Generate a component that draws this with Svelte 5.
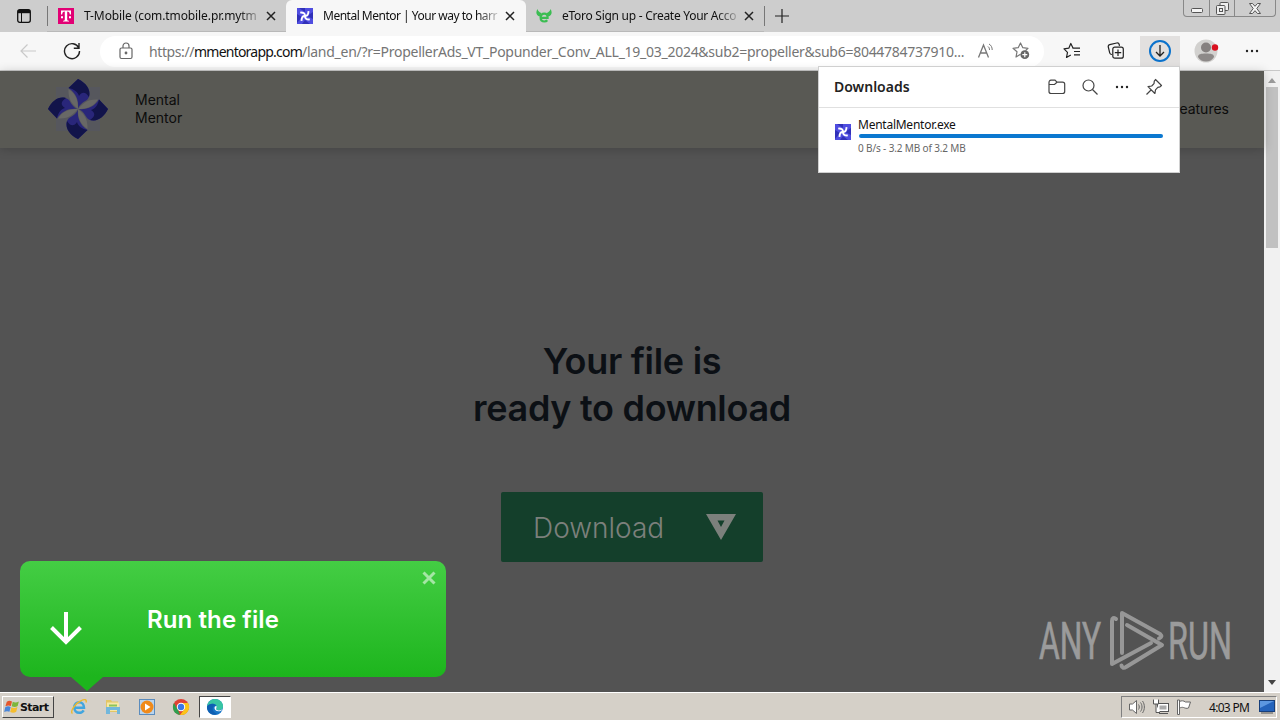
<script lang="ts">
	type Tab = { icon: 'tmobile' | 'mentor' | 'etoro'; title: string; active?: boolean };

	const tabs: Tab[] = [
		{ icon: 'tmobile', title: 'T-Mobile (com.tmobile.pr.mytm' },
		{ icon: 'mentor', title: 'Mental Mentor | Your way to harr', active: true },
		{ icon: 'etoro', title: 'eToro Sign up - Create Your Acco' }
	];

	const url = {
		scheme: 'https://',
		host: 'mmentorapp.com',
		path: '/land_en/?r=PropellerAds_VT_Popunder_Conv_ALL_19_03_2024&sub2=propeller&sub6=8044784737910...'
	};

	let downloadsOpen = $state(true);
	let toastOpen = $state(true);
</script>

{#snippet pinwheel()}
	<svg width="16" height="16" viewBox="0 0 16 16">
		<rect width="16" height="16" fill="#4f4de0" />
		<path d="M2 0h6v4zM10 8l6-4v7zM0 6l5 3-5 6zM8 12l5 4H5z" fill="#3030b8" />
		{#each [0, 90, 180, 270] as angle (angle)}
			<path
				d="M8 8C8.200 5.800 6.500 4.300 3.200 4.600"
				fill="none"
				stroke="#fff"
				stroke-width="1.900"
				transform={`rotate(${angle} 8 8)`}
			/>
		{/each}
	</svg>
{/snippet}

{#snippet favicon(name: Tab['icon'])}
	{#if name === 'tmobile'}
		<svg width="16" height="16" viewBox="0 0 16 16">
			<rect width="16" height="16" fill="#e20074" />
			<path
				d="M3 2.500h10v4h-1.200C11.700 4.500 11 3.600 9.200 3.500v7.700c0 1.200.5 1.500 1.800 1.500v.9H5v-.9c1.300 0 1.800-.3 1.800-1.500V3.500C5 3.600 4.300 4.500 4.200 6.500H3z"
				fill="#fff"
			/>
			<path d="M3 8.200h2v2H3zM11 8.200h2v2h-2z" fill="#fff" />
		</svg>
	{:else if name === 'mentor'}
		{@render pinwheel()}
	{:else}
		<svg width="16" height="16" viewBox="0 0 16 16">
			<path
				d="M1.500 1C-.5 4 0 7.500 4 8.500L5.500 5C3.500 4.500 2 3 1.500 1zM14.500 1c2 3 1.500 6.500-2.500 7.500L10.500 5c2-.5 3.500-2 4-4z"
				fill="#3bbd52"
			/>
			<path
				d="M5 9.800h6.600C11.700 7 10.300 5.600 8.200 5.600 6.100 5.600 4.600 7.200 4.600 9.500s1.500 4 3.800 4c1.200 0 2.200-.4 2.900-1.200"
				fill="none"
				stroke="#3bbd52"
				stroke-width="2.200"
			/>
		</svg>
	{/if}
{/snippet}

{#snippet cross()}
	<svg width="10" height="10" viewBox="0 0 10 10">
		<path d="M1 1l8 8M9 1L1 9" stroke="#222" stroke-width="1.500" />
	</svg>
{/snippet}

{#snippet dots()}
	<svg width="16" height="4" viewBox="0 0 16 4" fill="#222">
		<circle cx="3" cy="2" r="1.200" /><circle cx="8" cy="2" r="1.200" /><circle cx="13" cy="2" r="1.200" />
	</svg>
{/snippet}

<div class="desktop">
	<div class="tabbar">
		<div class="tab-actions">
			<svg width="14" height="14" viewBox="0 0 14 14">
				<rect x=".7" y=".7" width="12.600" height="12.600" rx="2" fill="none" stroke="#111" stroke-width="1.300" />
				<path d="M1 1h12v3.200H1z" fill="#111" />
				<path d="M4.500 4v9" stroke="#111" />
			</svg>
		</div>
		{#each tabs as tab (tab.icon)}
			<div class="tab" class:active={tab.active}>
				{@render favicon(tab.icon)}
				<span class="tab-title {tab.icon}">{tab.title}</span>
				{@render cross()}
			</div>
		{/each}
		<div class="new-tab">
			<svg width="14" height="14" viewBox="0 0 14 14">
				<path d="M7 0v14M0 7h14" stroke="#222" stroke-width="1.200" />
			</svg>
		</div>
		<div class="window-controls">
			<span class="min">
				<svg width="12" height="5" viewBox="0 0 12 5">
					<rect x=".5" y=".5" width="11" height="4" rx="1" fill="#f4f4f4" stroke="#555" />
				</svg>
			</span>
			<span class="max">
				<svg width="13" height="13" viewBox="0 0 13 13" fill="#eee" stroke="#555">
					<rect x="4" y=".5" width="8.500" height="8" rx="1" />
					<rect x=".5" y="3.500" width="8.500" height="9" rx="1" />
					<rect x="3.500" y="6.500" width="3" height="3" />
				</svg>
			</span>
			<span class="shut">
				<svg width="12" height="11" viewBox="0 0 12 11">
					<path
						d="M.5.500h3L6 3.300 8.500.500h3L7.800 5.500l3.700 5h-3L6 7.700l-2.500 2.800h-3l3.700-5z"
						fill="#f4f4f4"
						stroke="#555"
					/>
				</svg>
			</span>
		</div>
	</div>

	<div class="toolbar">
		<span class="tool">
			<svg width="18" height="16" viewBox="0 0 18 16" fill="none" stroke="#c9c9c9" stroke-width="1.200">
				<path d="M17 8H2M8.500 1.500L2 8l6.500 6.500" />
			</svg>
		</span>
		<span class="tool">
			<svg width="18" height="18" viewBox="0 0 18 18" fill="none" stroke="#222" stroke-width="1.400">
				<path d="M15.800 6A7.500 7.500 0 1 0 16.500 9M16 1v5.200h-5.200" />
			</svg>
		</span>
		<div class="address">
			<svg width="20" height="18" viewBox="0 0 20 18" fill="none" stroke="#666" stroke-width="1.200">
				<rect x="4" y="6" width="12" height="10.500" rx="1.500" />
				<path d="M7 6V4a3 3 0 0 1 6 0v2" />
				<circle cx="10" cy="11" r=".8" fill="#666" />
			</svg>
			<span class="url"><span>{url.scheme}</span><b>{url.host}</b><span class="path">{url.path}</span></span>
			<svg class="read" width="20" height="18" viewBox="0 0 20 18" fill="none" stroke="#777">
				<path d="M2.500 15.500L7.500 3l5 12.500M4.200 11h6.600" stroke-width="1.300" />
				<path d="M12 4.500c1.200 1 1.500 2 1.500 3.500M13 2c2.200 1.300 3.200 3.200 3.200 6" />
			</svg>
			<svg width="20" height="18" viewBox="0 0 20 18" fill="none" stroke="#777" stroke-width="1.200">
				<path d="M9.500 12.300L5 15l1-5.200L2 6.300l5.200-.6L9.500 1l2.300 4.700 5.200.6-2.500 2.300" stroke-linejoin="round" />
				<circle cx="13.800" cy="12.700" r="4.400" fill="#666" stroke="none" />
				<path d="M13.800 10.200v5M11.300 12.700h5" stroke="#fff" />
			</svg>
		</div>
		<span class="tool">
			<svg width="18" height="18" viewBox="0 0 18 18" fill="none" stroke="#222" stroke-width="1.200">
				<path d="M10 6L7.800 1.500 5.800 6.200 1 6.800l3.500 3.500-1 5.200 4.300-2.500" stroke-linejoin="round" />
				<path d="M9.500 6.200H17M11 9.500h6M11 12.800h6" />
			</svg>
		</span>
		<span class="tool">
			<svg width="18" height="18" viewBox="0 0 18 18" fill="none" stroke="#222" stroke-width="1.200">
				<path d="M5 12.500C3.500 12.500 3 12 2.700 10.800L1.300 5C1 3.700 1.500 3 2.700 2.700l7-1.700c1.400-.3 2.200.2 2.500 1.500l.3 1.300" />
				<rect x="5.800" y="5.200" width="10.500" height="11" rx="2" />
				<path d="M11 7.500v6.400M7.800 10.700h6.400" />
			</svg>
		</span>
		<button class="tool download-btn" aria-label="Downloads" onclick={() => (downloadsOpen = !downloadsOpen)}>
			<svg width="24" height="24" viewBox="0 0 24 24" fill="none">
				<circle cx="12" cy="12" r="10" stroke="#0b72cc" stroke-width="2" />
				<path d="M12 6v11M8 13l4 4 4-4" stroke="#222" stroke-width="1.300" />
			</svg>
		</button>
		<span class="tool avatar">
			<svg width="26" height="24" viewBox="0 0 26 24">
				<circle cx="12" cy="12" r="11.500" fill="#d2d1cf" />
				<circle cx="12" cy="8.500" r="5" fill="#85807f" />
				<path d="M4 18c0-3 3-3.500 8-3.500s8 .5 8 3.500c-1.700 3-4.700 4.600-8 4.600S5.700 21 4 18z" fill="#8d8988" />
				<circle cx="21" cy="8.500" r="3.200" fill="#d9101e" />
			</svg>
		</span>
		<span class="tool more">{@render dots()}</span>
	</div>

	<div class="viewport">
		<div class="page">
			<header class="site-header">
				<svg class="logo" width="62" height="62" viewBox="-31 -31 62 62">
					<rect x="-22" y="-22" width="44" height="44" fill="#56575d" />
					{#each [0, 90, 180, 270] as angle (angle)}
						<g transform={`rotate(${angle})`}>
							<path d="M0 0C1-9-2-16-9.500-21L0-30C10-25 15-15 9-9 4-6 1-4 0 0z" fill="#29267a" />
							<path d="M0-30L-9.500-21C-4-20 0-17 1-13 4-18 8-17 11-12 13-20 8-26 0-30z" fill="#12144a" />
							<path d="M0 0C-5-5-10-8-9.500-20-2-15 0-9 0 0z" fill="#686866" />
						</g>
					{/each}
				</svg>
				<span class="brand">Mental<br />Mentor</span>
				<span class="nav-link">Features</span>
			</header>

			<main>
				<h1>Your file is<br />ready to download</h1>
				<button class="cta">
					<span>Download</span>
					<svg width="30" height="26" viewBox="0 0 30 26">
						<path d="M0 0h30L15 26zM11.500 6.500L15 13l3.500-6.500z" fill="#7c807c" fill-rule="evenodd" />
					</svg>
				</button>
			</main>

			<svg class="watermark" width="204" height="64" viewBox="0 0 204 64">
				<g fill="#9b9b9b" stroke="#9b9b9b" stroke-width=".7" font-family="Roboto, sans-serif" font-size="52">
					<text x="2" y="50" textLength="62" lengthAdjust="spacingAndGlyphs">ANY</text>
					<text x="131" y="50" textLength="64" lengthAdjust="spacingAndGlyphs">RUN</text>
				</g>
				<g fill="none" stroke="#979797" stroke-width="4" stroke-linejoin="round" stroke-linecap="round">
					<path d="M79 10c-2-2-4-1-4 2v43l39-21" />
					<path d="M85 44V4l38 21c2 2 2 3-1 4.500" />
					<path d="M90 16l35 20-36 22c-2 1.500-4 1-4.500-1.500" />
				</g>
			</svg>
		</div>

		<div class="scrollbar">
			<svg width="8" height="5" viewBox="0 0 8 5"><path d="M0 5l4-5 4 5z" fill="#9b9b9b" /></svg>
			<div class="thumb"></div>
			<svg class="down" width="8" height="5" viewBox="0 0 8 5"><path d="M0 0l4 5 4-5z" fill="#444" /></svg>
		</div>
	</div>

	{#if downloadsOpen}
		<div class="downloads">
			<div class="downloads-head">
				<strong>Downloads</strong>
				<svg width="18" height="16" viewBox="0 0 18 16" fill="none" stroke="#444" stroke-width="1.200">
					<path d="M1 12.500v-9C1 2 1.700 1.200 3 1.200h4l2 2h5.500c1.500 0 2.200.8 2.200 2v7.300c0 1.300-.8 2-2.200 2H3.200c-1.400 0-2.200-.7-2.200-2z" />
					<path d="M1 5.500h5.500L9 3.200" />
				</svg>
				<svg width="18" height="16" viewBox="0 0 18 16" fill="none" stroke="#444" stroke-width="1.200">
					<circle cx="7.500" cy="6.500" r="5.500" />
					<path d="M11.500 10.500l5 5" />
				</svg>
				{@render dots()}
				<svg width="18" height="18" viewBox="0 0 18 18" fill="none" stroke="#444" stroke-width="1.200" stroke-linejoin="round">
					<path d="M10.500 1.500l6 6-1.500 1.300-2.200.6-2.300 2.400-.6 3.700L3 8.600l3.700-.6L9 5.600l.3-2.500zM6.300 11.800L1.500 16.500" />
				</svg>
			</div>
			<div class="download-item">
				{@render pinwheel()}
				<div class="download-info">
					<span class="filename">MentalMentor.exe</span>
					<div class="progress"></div>
					<span class="status">0 B/s - 3.2 MB of 3.2 MB</span>
				</div>
			</div>
		</div>
	{/if}

	{#if toastOpen}
		<div class="toast">
			<svg width="32" height="34" viewBox="0 0 32 34" fill="none" stroke="#fff" stroke-width="4">
				<path d="M16 1v29M1.500 16.500L16 31l14.500-14.500" />
			</svg>
			<span>Run the file</span>
			<button class="toast-close" aria-label="Close" onclick={() => (toastOpen = false)}>
				<svg width="14" height="14" viewBox="0 0 14 14">
					<path d="M1.500 1.500l11 11M12.500 1.500l-11 11" stroke="#a5e6a5" stroke-width="3" />
				</svg>
			</button>
		</div>
	{/if}

	<div class="taskbar">
		<div class="start">
			<svg width="16" height="16" viewBox="0 0 17 16">
				<path d="M3 2.500C5 1 6.500 1.300 8.500 2.200L7.300 7C5.500 6.200 4 6 1.500 7.300z" fill="#e5562b" />
				<path d="M9.300 2.500c2 1 4 1 6.500-.3L14.500 7c-2 1.300-4 1.300-6.300.3z" fill="#7db63b" />
				<path d="M1.300 8.200c2-1.300 4-1.200 5.800-.3L5.800 13C4 12.200 2.300 12.200.2 13.200z" fill="#4a86d8" />
				<path d="M7.900 8.300c2 1 4 1 6.400-.4L13 13c-2 1.400-4.200 1.400-6.400.3z" fill="#f5bd2e" />
			</svg>
			<span>Start</span>
		</div>
		<div class="quick">
			<span>
				<svg width="18" height="18" viewBox="0 0 18 18" fill="none">
					<path d="M4.500 9.800h9.500C14 6.500 12 4.200 9.200 4.200S4.300 6.300 4.300 9.500s2 5.300 5 5.300c2 0 3.500-1 4.400-2.500" stroke="#41a5df" stroke-width="2.500" />
					<path d="M2.500 15.500C-.5 14 5 5.500 10.500 3c4.500-2.300 6.500-1.500 5.500 1.500" stroke="#ecb92e" stroke-width="1.400" />
				</svg>
			</span>
			<span>
				<svg width="18" height="18" viewBox="0 0 18 18">
					<path d="M2 2h5l1 1.500h6V14H2z" fill="#e3c665" />
					<path d="M3 4.500h12V13H3z" fill="#f5e7a7" />
					<path d="M2 9h14v7h-3v-4H6v4H2z" fill="#72b7dc" />
					<path d="M5 6.500h8v2H5z" fill="#8dc45a" />
				</svg>
			</span>
			<span>
				<svg width="18" height="18" viewBox="0 0 18 18">
					<rect x="1.500" y="1.500" width="15" height="15" fill="#b9d4ee" stroke="#5b8cbd" />
					<circle cx="9" cy="9" r="6.500" fill="#f08a1a" />
					<path d="M7 5.500l5.500 3.500L7 12.500z" fill="#fff" />
				</svg>
			</span>
			<span>
				<svg width="18" height="18" viewBox="0 0 18 18">
					<circle cx="9" cy="9" r="8" fill="#e04235" />
					<path d="M2 5l4.500 8L8 17A8 8 0 0 1 2 5z" fill="#2f9f4f" />
					<path d="M9 5h7a8 8 0 0 1-8 12l4.500-6z" fill="#fbc518" />
					<circle cx="9" cy="9" r="4.200" fill="#fff" />
					<circle cx="9" cy="9" r="3.200" fill="#3b78e7" />
				</svg>
			</span>
			<span class="running">
				<svg width="18" height="18" viewBox="0 0 18 18">
					<circle cx="9" cy="9" r="8" fill="#1675c7" />
					<path d="M1 8.500C2 3 5.500 1 9 1c5 0 8.500 4 8 8-.5 3-4 4-6.500 2.800C9.500 11 11 10 10.500 8 9.500 5 4 4.500 1 8.500z" fill="#38c5a3" />
					<path d="M1 8.500C3 5 8.500 5 10.300 7.500 7 7.500 6 10 7 12.500c1 2 3 3 4.500 3.500C5 18.500.5 14 1 8.500z" fill="#0e5fb2" />
					<path d="M10.500 8c.5 2-1 2.800 0 3.800 2.500 1.300 5 .2 6-.8-.5 1.500-2 2.300-4 2.300-2.500 0-4-1.500-4-3.300 0-1.200.8-2.200 2-2z" fill="#fff" />
				</svg>
			</span>
		</div>
		<div class="tray">
			<svg width="18" height="16" viewBox="0 0 18 16" fill="#fff" stroke="#666">
				<path d="M1.500 5h3L8.500 1.500v13L4.500 11h-3z" />
				<path d="M10.500 5.500c1 1.500 1 3.500 0 5M12.500 3.500c2 2.500 2 6.500 0 9M14.500 2c2.500 3.500 2.500 8.500 0 12" fill="none" />
			</svg>
			<svg width="18" height="16" viewBox="0 0 18 16" fill="#fff" stroke="#555">
				<rect x="5.500" y="4.500" width="11" height="8" />
				<rect x="7.500" y="6.500" width="7" height="4" fill="#aaa" stroke="none" />
				<path d="M7 14.500h9" />
				<path d="M1.500.500v4.500h5V.500M4 5v8.500h4" />
			</svg>
			<svg width="18" height="16" viewBox="0 0 18 16" fill="#fff" stroke="#666">
				<path d="M3.500 2.500c2-1 4-1 6 .5h5l-2 6c-2 .8-3.500 0-5-.5-1.500-.4-2.500 0-4 .5z" />
				<path d="M1.500 1v14.500h2V1z" />
			</svg>
			<time>4:03 PM</time>
			<svg width="16" height="14" viewBox="0 0 16 14">
				<rect x=".5" y=".5" width="15" height="11" fill="#2463bb" stroke="#173f7b" />
				<path d="M1 1h14L1 8z" fill="#5c97e0" />
				<path d="M2 13h12" stroke="#555" />
			</svg>
		</div>
	</div>
</div>

<style>
	:global(body) {
		overflow: hidden;
	}
	.desktop {
		position: relative;
		display: flex;
		flex-direction: column;
		width: 1280px;
		height: 720px;
		overflow: hidden;
		font-family: 'Noto Sans', 'Open Sans', sans-serif;
		color: #111;
	}
	svg {
		display: block;
		flex: none;
	}
	button {
		border: none;
		padding: 0;
		font: inherit;
	}

	/* tab strip */
	.tabbar {
		display: flex;
		flex: none;
		height: 32px;
		background: #cdcdcd;
	}
	.tab-actions {
		display: flex;
		align-items: center;
		justify-content: center;
		box-sizing: border-box;
		width: 47px;
		height: 32px;
	}
	.tab {
		display: flex;
		align-items: center;
		box-sizing: border-box;
		width: 239px;
		height: 32px;
		padding-left: 11px;
		border-bottom: 1px solid #b9b9b9;
	}
	.tab:nth-child(2) {
		background: linear-gradient(#777, #777) 0 6px / 1px 20px no-repeat;
	}
	.tab:nth-child(4) {
		width: 238px;
		padding-left: 10px;
	}
	.tab.active {
		width: 240px;
		border: none;
		border-radius: 6px 6px 0 0;
		background: #f7f7f7;
	}
	.tab-title {
		width: 176px;
		margin: 0 6px 0 10px;
		font-size: 12px;
		line-height: 18px;
		white-space: nowrap;
		mask-image: linear-gradient(90deg, #000 155px, transparent 180px);
	}
	.tab-title.tmobile {
		letter-spacing: -0.1px;
	}
	.tab-title.mentor {
		letter-spacing: -0.5px;
	}
	.tab-title.etoro {
		letter-spacing: -0.27px;
	}
	.new-tab {
		display: flex;
		align-items: center;
		padding-left: 11px;
		background: linear-gradient(#777, #777) 0 6px / 1px 20px no-repeat;
	}
	.window-controls {
		display: flex;
		box-sizing: border-box;
		width: 93px;
		height: 17px;
		margin: 0 4px 0 auto;
		border: 1px solid #888;
		border-top: none;
		border-radius: 0 0 4px 4px;
	}
	.window-controls span {
		display: flex;
		align-items: center;
		justify-content: center;
	}
	.min {
		width: 25px;
		padding-top: 4px;
	}
	.max {
		width: 24px;
		border: solid #888;
		border-width: 0 1px;
	}
	.shut {
		flex: 1;
	}

	/* navigation toolbar */
	.toolbar {
		display: flex;
		flex: none;
		align-items: center;
		gap: 4px;
		box-sizing: border-box;
		height: 39px;
		padding: 0 8px;
		border-bottom: 1px solid #c8c8c8;
		background: #f7f7f7;
	}
	.tool {
		display: flex;
		align-items: center;
		justify-content: center;
		width: 40px;
		height: 31px;
	}
	.download-btn {
		background: #e2e0df;
	}
	.avatar {
		padding-left: 6px;
		box-sizing: border-box;
	}
	.more {
		margin-left: 4px;
	}
	.address {
		display: flex;
		align-items: center;
		box-sizing: border-box;
		width: 944px;
		height: 31px;
		margin: 0 4px;
		padding-left: 16px;
		border-radius: 16px;
		background: #fff;
	}
	.url {
		width: 827px;
		margin-left: 13px;
		font-size: 14px;
		letter-spacing: -0.4px;
		white-space: nowrap;
		color: #757575;
	}
	.url b {
		font-weight: 400;
		letter-spacing: -0.78px;
		color: #111;
	}
	.url .path {
		letter-spacing: -0.27px;
	}
	.read {
		margin-right: 15px;
	}

	/* dimmed page */
	.viewport {
		display: flex;
		flex: none;
		height: 621px;
	}
	.page {
		position: relative;
		width: 1264px;
		background: #535353;
		font-family: Inter, sans-serif;
	}
	.site-header {
		display: flex;
		align-items: center;
		box-sizing: border-box;
		height: 77px;
		padding: 0 35px 2px 47px;
		background: #595954;
		box-shadow: 0 1px 10px rgba(0, 0, 0, 0.2);
	}
	.brand {
		margin-left: 26px;
		font-size: 14px;
		line-height: 18px;
		color: #0c0c0c;
	}
	.nav-link {
		margin-left: auto;
		font-size: 14px;
		color: #0c0c0c;
	}
	main {
		display: flex;
		flex-direction: column;
		align-items: center;
		padding-top: 190px;
	}
	h1 {
		margin: 0 0 60px;
		font-size: 36px;
		font-weight: 600;
		line-height: 47px;
		letter-spacing: -0.3px;
		text-align: center;
		color: #0c1015;
	}
	.cta {
		display: flex;
		align-items: center;
		justify-content: space-between;
		box-sizing: border-box;
		width: 262px;
		height: 70px;
		padding: 1px 27px 0 32px;
		border-radius: 2px;
		background: #143f2b;
		font-size: 28px;
		font-weight: 300;
		color: #7c807c;
	}
	.cta svg {
		margin-bottom: 2px;
	}
	.watermark {
		position: absolute;
		right: 23px;
		bottom: 19px;
	}
	.scrollbar {
		display: flex;
		flex-direction: column;
		align-items: center;
		box-sizing: border-box;
		width: 16px;
		padding: 7px 0;
		background: #f1f1f1;
	}
	.thumb {
		width: 12px;
		height: 161px;
		margin-top: 4px;
		background: #c1c1c1;
	}
	.down {
		margin-top: auto;
	}

	/* downloads flyout */
	.downloads {
		position: absolute;
		top: 66px;
		left: 818px;
		box-sizing: border-box;
		width: 362px;
		height: 107px;
		border: 1px solid #d0d0d0;
		background: #fff;
	}
	.downloads-head {
		display: flex;
		align-items: center;
		gap: 15px;
		box-sizing: border-box;
		height: 41px;
		padding: 0 16px 1px 15px;
		border-bottom: 1px solid #e0e0e0;
	}
	.downloads-head strong {
		margin-right: auto;
		font-size: 14px;
		font-weight: 600;
		color: #222;
	}
	.download-item {
		display: flex;
		gap: 7px;
		padding: 9px 16px 0;
	}
	.download-item > :global(svg) {
		margin-top: 7px;
	}
	.download-info {
		flex: 1;
		display: flex;
		flex-direction: column;
	}
	.filename {
		font-size: 12px;
		line-height: 16px;
		letter-spacing: -0.25px;
	}
	.progress {
		height: 4px;
		margin: 1px 0 0 1px;
		border-radius: 2px;
		background: #0b78d0;
	}
	.status {
		margin-top: 3px;
		font-size: 10px;
		line-height: 14px;
		letter-spacing: -0.14px;
		color: #666;
	}

	/* "run the file" callout */
	.toast {
		position: absolute;
		top: 561px;
		left: 20px;
		display: flex;
		align-items: center;
		box-sizing: border-box;
		width: 426px;
		height: 116px;
		padding-left: 30px;
		border-radius: 10px;
		background: linear-gradient(#44cd44, #1db51d);
		font-family: Inter, sans-serif;
		font-size: 24px;
		font-weight: 600;
		letter-spacing: 0.1px;
		color: #fff;
	}
	.toast > svg {
		margin-top: 18px;
	}
	.toast span {
		margin-left: 65px;
	}
	.toast::after {
		content: '';
		position: absolute;
		top: 116px;
		left: 51px;
		border: solid transparent;
		border-width: 14px 16px 0;
		border-top-color: #1db51d;
	}
	.toast-close {
		position: absolute;
		top: 10px;
		right: 10px;
		background: none;
	}

	/* taskbar */
	.taskbar {
		display: flex;
		align-items: center;
		box-sizing: border-box;
		height: 28px;
		padding: 2px 3px 1px 2px;
		border-top: 1px solid #fff;
		background: #d5d0c8;
	}
	.start {
		display: flex;
		align-items: center;
		box-sizing: border-box;
		width: 52px;
		height: 22px;
		padding-left: 1px;
		border: 1px solid;
		border-color: #fff #444 #444 #fff;
		font: bold 11px 'DejaVu Sans', sans-serif;
		letter-spacing: -0.6px;
	}
	.quick {
		display: flex;
		margin-left: 8px;
	}
	.quick span {
		display: flex;
		align-items: center;
		justify-content: center;
		box-sizing: border-box;
		width: 34px;
		height: 22px;
	}
	.quick .running {
		width: 32px;
		margin-left: 1px;
		border: 1px solid;
		border-color: #444 #fff #fff #444;
		background: #fff;
	}
	.tray {
		display: flex;
		align-items: center;
		gap: 6px;
		box-sizing: border-box;
		width: 156px;
		height: 22px;
		margin-left: auto;
		padding-left: 6px;
		border: 1px solid;
		border-color: #808080 #fff #fff #808080;
		font-size: 12px;
	}
	time {
		width: 40px;
		margin: 0 4px 0 9px;
		letter-spacing: -0.7px;
		white-space: nowrap;
	}
</style>
